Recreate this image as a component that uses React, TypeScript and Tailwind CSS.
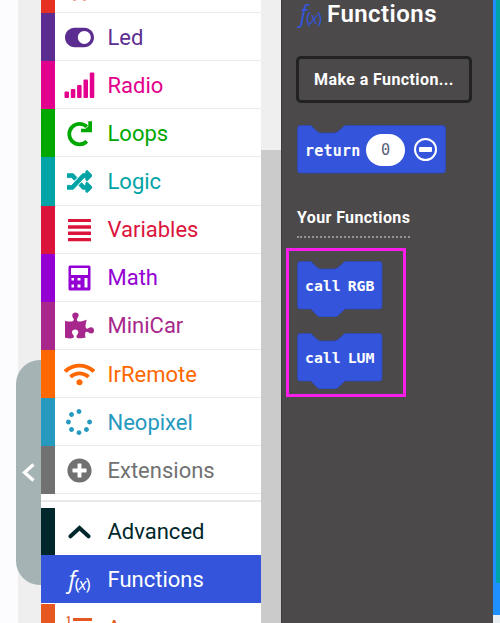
import type { ReactNode } from 'react';
import { FaToggleOn, FaRandom, FaPuzzlePiece, FaWifi, FaSpinner, FaPlusCircle } from 'react-icons/fa';

function Row({ bar, text, icon, label }: { bar: string; text: string; icon: ReactNode; label: string }) {
  return (
    <div className="flex h-[48.15px] shrink-0">
      <div className={'w-[14px] shrink-0 ' + bar} />
      <div className={'flex flex-1 items-center border-b border-[#e6ecec] pl-[8px] pt-px ' + text}>
        <span className="flex w-[32px] shrink-0 justify-center">{icon}</span>
        <span className="ml-[12.5px] pt-px text-[22px] leading-none">{label}</span>
      </div>
    </div>
  );
}

function Fx({ className = '' }: { className?: string }) {
  return (
    <span className={'flex items-baseline font-["Open_Sans",sans-serif] leading-none ' + className}>
      <span className="text-[23px] italic">f</span>
      <span className="relative top-[2px] -ml-px text-[17px] tracking-[-1.2px]">
        (<i>x</i>)
      </span>
    </span>
  );
}

const Signal = () => (
  <svg width="31" height="26" viewBox="0 0 31 26" fill="currentColor">
    <rect x="0.5" y="19.5" width="4.5" height="6.5" rx="1" />
    <rect x="6.8" y="17" width="4.5" height="9" rx="1" />
    <rect x="13.1" y="13" width="4.5" height="13" rx="1" />
    <rect x="19.5" y="7.5" width="4.5" height="18.5" rx="1" />
    <rect x="25.8" y="0.5" width="4.5" height="25.5" rx="1" />
  </svg>
);

const Repeat = () => (
  <svg width="27" height="27" viewBox="0 0 27 27" fill="none" stroke="currentColor">
    <path d="M20.8 21.4 A10.3 10.3 0 1 1 20.8 6.8" strokeWidth="3.7" />
    <path d="M15 12.2V8.8H19.5L22.3 6.2V1.3H26V12.2Z" fill="currentColor" stroke="none" />
  </svg>
);

const Lines = () => (
  <svg width="23" height="24" viewBox="0 0 23 24" fill="currentColor">
    <rect x="0" y="1" width="23" height="3" rx=".5" />
    <rect x="0" y="7.3" width="23" height="3.5" rx=".5" />
    <rect x="0" y="13.6" width="23" height="3.5" rx=".5" />
    <rect x="0" y="20" width="23" height="3.2" rx=".5" />
  </svg>
);

const Calculator = () => (
  <svg width="23" height="26" viewBox="0 0 23 26" fill="currentColor">
    <path
      fillRule="evenodd"
      d="M2 0.5H21Q22.5.5 22.5 2V24Q22.5 25.5 21 25.5H2Q.5 25.5.5 24V2Q.5.5 2 .5ZM3 3V10H20V3ZM3.5 13V15.5H6V13ZM9.5 13V15.5H12.5V13ZM16.5 13V22.5H19.5V13ZM3.5 19.5V22.5H6V19.5ZM9.5 19.5V22.5H12.5V19.5Z"
    />
  </svg>
);

const Chevron = () => (
  <svg width="23" height="14" viewBox="0 0 23 14" fill="none" stroke="currentColor" strokeWidth="4" strokeLinecap="round">
    <path d="M2.5 11.3L11.5 3L20.5 11.3" />
  </svg>
);

function CallBlock({ name }: { name: string }) {
  return (
    <div className="relative h-[56px] w-[86px]">
      <svg className="absolute inset-0" width="86" height="56" viewBox="0 0 86 56">
        <path
          d="M3.5.5H14L20 6.5Q22 8 24 8H37Q39 8 41 6.5L48 .5H82Q85 .5 85 3.5V45Q85 48 82 48H48L41 54.5Q39.5 56 37 56H24Q22 56 20 54.5L14 48H3.5Q.5 48 .5 45V3.5Q.5.5 3.5.5Z"
          fill="#3455db" stroke="#2c48bb" strokeWidth=".7"
        />
      </svg>
      <div className="relative flex h-[50px] items-center gap-[7px] pl-[8px] pt-px font-['DejaVu_Sans_Mono',monospace] text-[14.8px] font-bold leading-none text-white">
        <span>call</span>
        <span>{name}</span>
      </div>
    </div>
  );
}

export default function App() {
  return (
    <div className="relative flex h-[623px] w-[500px] overflow-hidden bg-[#fcfcff] font-[Roboto,sans-serif]">
      <div className="ml-[18px] w-[23px] shrink-0 bg-[#efefef]" />
      <div className="absolute left-[16px] top-[360px] flex h-[225px] w-[25px] items-center justify-center rounded-l-[24px] bg-[#a5b3b5]">
        <svg width="14" height="20" viewBox="0 0 14 20" fill="none" stroke="white" strokeWidth="3.3">
          <path d="M11.5 1.5L2.5 9.5L11.5 17.5" />
        </svg>
      </div>

      <div className="flex h-[623px] w-[220px] shrink-0 flex-col bg-white">
        <div className="flex h-[13px] shrink-0">
          <div className="w-[14px] bg-[#e63022]" />
          <div className="flex flex-1 border-b border-[#e6ecec] pl-[18px]">
            <span className="h-px w-[3px] bg-[#f3aaa3]" />
            <span className="ml-[7px] h-px w-[3px] bg-[#f3aaa3]" />
          </div>
        </div>
        <Row bar="bg-[#5c2d91]" text="text-[#5c2d91]" label="Led" icon={<FaToggleOn size={29} />} />
        <Row bar="bg-[#e3008c]" text="text-[#e3008c]" label="Radio" icon={<Signal />} />
        <Row bar="bg-[#00a800]" text="text-[#00a800]" label="Loops" icon={<Repeat />} />
        <Row bar="bg-[#00a4a6]" text="text-[#00a4a6]" label="Logic" icon={<FaRandom size={25} stroke="currentColor" strokeWidth={18} />} />
        <Row bar="bg-[#dc143c]" text="text-[#dc143c]" label="Variables" icon={<Lines />} />
        <Row bar="bg-[#9400d3]" text="text-[#9400d3]" label="Math" icon={<Calculator />} />
        <Row bar="bg-[#a8278c]" text="text-[#a8278c]" label="MiniCar" icon={<FaPuzzlePiece size={29} />} />
        <Row bar="bg-[#ff6800]" text="text-[#ff6800]" label="IrRemote" icon={<FaWifi size={31} />} />
        <Row bar="bg-[#2699bf]" text="text-[#2699bf]" label="Neopixel" icon={<FaSpinner size={26} />} />
        <Row bar="bg-[#717171]" text="text-[#717171]" label="Extensions" icon={<FaPlusCircle size={25} />} />
        <div className="mt-[5.5px] mb-[6px] h-[2px] shrink-0 bg-[#eaeaea]" />
        <Row bar="bg-[#00272b]" text="text-[#00272b]" label="Advanced" icon={<Chevron />} />
        <div className="-mt-px flex h-[47.5px] shrink-0 items-center bg-[#3455db] pl-[22px] pt-px text-white">
          <span className="flex w-[32px] shrink-0 justify-center"><Fx className="font-medium" /></span>
          <span className="ml-[12.5px] pt-px text-[22px] leading-none">Functions</span>
        </div>
        <div className="mt-[1px] flex h-[48px] shrink-0 text-[#e65722]">
          <div className="w-[14px] shrink-0 bg-[#e65722]" />
          <div className="flex pl-[11px] pt-[12px]">
            <span className="w-[7px] text-[9px] font-bold leading-[9px]">1</span>
            <span className="mt-[2px] h-[3px] w-[19px] bg-[#e65722]" />
            <span className="ml-[15px] text-[22px] leading-[25px]">Arrays</span>
          </div>
        </div>
      </div>

      <div className="w-[20px] shrink-0 bg-[#efefef] pt-[150px]">
        <div className="h-[473px] bg-[#cbcbcb]" />
      </div>

      <div className="h-[623px] w-[212px] shrink-0 border-l border-[#3d3c3d] bg-[#4b494a] pl-[14px] text-white">
        <div className="flex h-[27px] items-center">
          <Fx className="ml-[4px] -mt-px w-[24px] text-[#3455db]" />
          <h1 className="ml-[3px] text-[24px] font-semibold leading-none tracking-[0.45px]">Functions</h1>
        </div>
        <button className="mt-[29px] flex h-[47px] w-[176px] items-center justify-center whitespace-nowrap rounded-[5px] border-[3px] border-[#222] pt-px text-[16px] font-bold leading-none tracking-[0.4px]">
          Make a Function...
        </button>
        <div className="relative mt-[22px] ml-[1px] h-[49px] w-[149px]">
          <svg className="absolute inset-0" width="149" height="49" viewBox="0 0 149 49">
            <path
              d="M3.5.5H14L20 6.5Q22 8 24 8H37Q39 8 41 6.5L48 .5H145.5Q148.5 .5 148.5 3.5V45Q148.5 48 145.5 48H3.5Q.5 48 .5 45V3.5Q.5.5 3.5.5Z"
              fill="#3455db" stroke="#2c48bb" strokeWidth=".7"
            />
          </svg>
          <div className="relative flex h-[49px] items-center pl-[8px] font-['DejaVu_Sans_Mono',monospace] text-[15.2px] leading-none">
            <span className="w-[61px] pt-[3px] text-[15px] font-bold tracking-[0.2px]">return</span>
            <span className="flex h-[32px] w-[39px] items-center justify-center rounded-full bg-white pt-[2px] text-[#575e75]">0</span>
            <span className="ml-[9px] flex size-[23px] items-center justify-center rounded-full border-2 border-white">
              <span className="h-[5px] w-[13px] rounded-[1px] bg-white" />
            </span>
          </div>
        </div>
        <div className="mt-[34px] ml-[1px] flex h-[30px] w-[113px] whitespace-nowrap border-b-2 border-dotted border-[#969595] pt-px text-[16px] font-bold leading-[18px] tracking-[0.38px]">
          Your Functions
        </div>
        <div className="-ml-[10px] mt-[10px] flex h-[149px] w-[120px] flex-col gap-[16px] border-[3px] border-[#fa1dec] pl-[8px] pt-[10px]">
          <CallBlock name="RGB" />
          <CallBlock name="LUM" />
        </div>
      </div>

      <div className="flex w-[7px] shrink-0 flex-col bg-[#1e90ff]">
        <div className="ml-[3px] h-[583px] rounded-bl-[3px] bg-[#00a4a6]" />
        <div className="mt-[32px] h-[8px] bg-[#e9eef2]" />
      </div>
    </div>
  );
}
